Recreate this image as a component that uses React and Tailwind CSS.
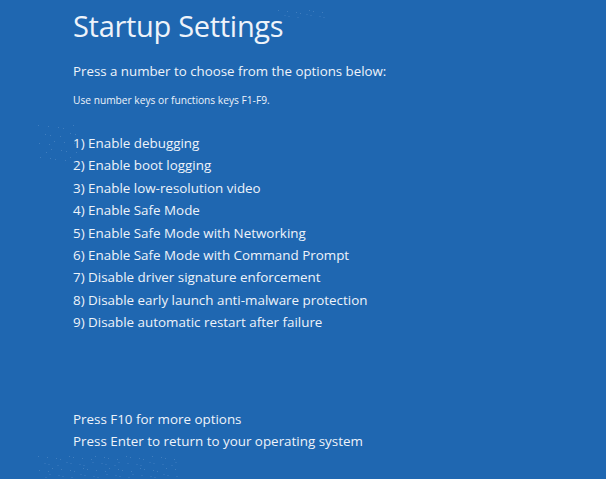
const options = [
  'Enable debugging',
  'Enable boot logging',
  'Enable low-resolution video',
  'Enable Safe Mode',
  'Enable Safe Mode with Networking',
  'Enable Safe Mode with Command Prompt',
  'Disable driver signature enforcement',
  'Disable early launch anti-malware protection',
  'Disable automatic restart after failure',
];

// faint progress-ring dots left on the screen
function Dots({ cols, rows, dx, dy, className }) {
  const dots = [];
  for (let r = 0; r < rows; r++) {
    for (let c = 0; c < cols; c++) {
      const x = c * dx + (r % 2) * (dx / 2) + ((c * 7 + r * 3) % 5) - 2;
      const y = r * dy + ((c * 5 + r) % 4) - 1;
      dots.push(<rect key={`${r}-${c}`} x={x + 2} y={y + 2} width="1" height="1" />);
    }
  }
  return (
    <svg className={className} fill="#5a8fca" opacity="0.55">
      {dots}
    </svg>
  );
}

export default function App() {
  return (
    <div className="relative w-[606px] h-[479px] bg-[#1f67b1] text-[#eef3fa] font-['Open_Sans','Noto_Sans',sans-serif] flex flex-col pl-[73px] pt-[4px] overflow-hidden">
      <Dots cols={7} rows={2} dx={7} dy={4} className="absolute left-[278px] top-[9px] w-[56px] h-[14px]" />
      <Dots cols={5} rows={5} dx={8} dy={8} className="absolute left-[38px] top-[124px] w-[46px] h-[46px]" />
      <Dots cols={20} rows={4} dx={7} dy={6} className="absolute left-[38px] top-[455px] w-[150px] h-[26px]" />
      <h1 className="text-[29px] leading-[44px] font-normal tracking-[-0.3px]">Startup Settings</h1>
      <p className="mt-[13px] text-[13.3px] leading-[20px]">Press a number to choose from the options below:</p>
      <p className="mt-[12px] text-[10.2px] leading-[14px]">Use number keys or functions keys F1-F9.</p>
      <ol className="mt-[25px] flex flex-col text-[13.4px] leading-[22.4px]">
        {options.map((o, i) => (
          <li key={o}>{i + 1}) {o}</li>
        ))}
      </ol>
      <div className="mt-[74px] flex flex-col text-[13.4px] leading-[22px]">
        <p>Press F10 for more options</p>
        <p>Press Enter to return to your operating system</p>
      </div>
    </div>
  );
}
